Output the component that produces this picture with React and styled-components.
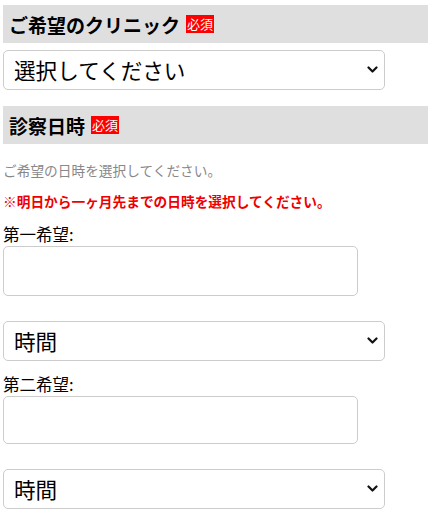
import React from 'react'
import styled, { createGlobalStyle } from 'styled-components'

const GlobalStyle = createGlobalStyle`
  body {
    margin: 0;
    background: #fff;
    font-family: "Noto Sans CJK JP", "Noto Sans", sans-serif;
    color: #000;
  }
`

const Page = styled.div`
  padding: 5px 0 0 3px;
`

const SectionHeader = styled.h3`
  display: flex;
  align-items: center;
  height: 38px;
  margin: ${p => p.$gap || 0}px 0 0;
  padding-left: 6px;
  background: #dfdfdf;
  font-size: 19px;
  font-weight: 700;
  line-height: 1;
`

const Badge = styled.span`
  display: inline-block;
  margin-left: 6px;
  padding: 0 1px;
  height: 18px;
  line-height: 18px;
  background: #ff0000;
  color: #fff;
  font-size: 13px;
  font-weight: 400;
`

const SelectWrap = styled.div`
  position: relative;
  width: 382px;
  margin-top: ${p => p.$gap || 0}px;
`

const Select = styled.select`
  appearance: none;
  display: block;
  width: 100%;
  height: 40px;
  box-sizing: border-box;
  border: 1px solid #cccccc;
  border-radius: 5px;
  background: #fff;
  padding: 0 30px 0 10px;
  font-family: "Noto Sans CJK JP", sans-serif;
  font-size: 21.6px;
  color: #000;
  line-height: 38px;
`

const Chevron = styled.svg`
  position: absolute;
  right: 7px;
  top: 50%;
  margin-top: -4px;
  width: 11px;
  height: 8px;
  pointer-events: none;
`

const Note = styled.p`
  margin: ${p => p.$gap}px 0 0;
  font-size: 13.7px;
  line-height: 20px;
  color: ${p => (p.$alert ? '#ee0000' : '#888888')};
  font-weight: ${p => (p.$alert ? 700 : 400)};
`

const Label = styled.div`
  margin-top: ${p => p.$gap}px;
  font-size: 16.5px;
  line-height: 20px;
`

const DateInput = styled.input`
  display: block;
  width: 355px;
  height: ${p => p.$h}px;
  box-sizing: border-box;
  margin-top: 2px;
  border: 1px solid #cccccc;
  border-radius: 5px;
  background: #fff;
  font-size: 16px;
  padding: 0 8px;
`

const SelectBox = ({ gap, children }) => (
  <SelectWrap $gap={gap}>
    <Select defaultValue="">
      <option value="">{children}</option>
    </Select>
    <Chevron viewBox="0 0 11 8">
      <path d="M1.5 1.5 L5.5 5.5 L9.5 1.5" fill="none" stroke="#111" strokeWidth="2.2" strokeLinecap="round" strokeLinejoin="round" />
    </Chevron>
  </SelectWrap>
)

export default function App() {
  return (
    <Page>
      <GlobalStyle />
      <SectionHeader>
        ご希望のクリニック<Badge>必須</Badge>
      </SectionHeader>
      <SelectBox gap={7}>選択してください</SelectBox>

      <SectionHeader $gap={16}>
        診察日時<Badge>必須</Badge>
      </SectionHeader>
      <Note $gap={16}>ご希望の日時を選択してください。</Note>
      <Note $gap={11} $alert>※明日から一ヶ月先までの日時を選択してください。</Note>

      <Label $gap={13}>第一希望:</Label>
      <DateInput type="text" $h={50} />
      <SelectBox gap={25}>時間</SelectBox>

      <Label $gap={13}>第二希望:</Label>
      <DateInput type="text" $h={48} />
      <SelectBox gap={25}>時間</SelectBox>
    </Page>
  )
}
